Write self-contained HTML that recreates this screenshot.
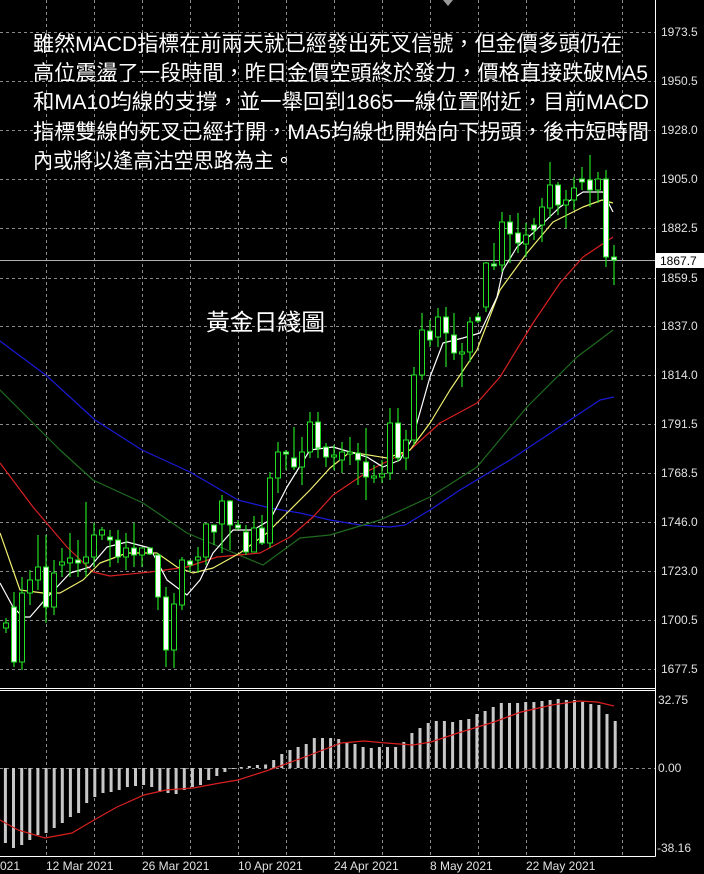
<!DOCTYPE html>
<html><head><meta charset="utf-8"><style>
html,body{margin:0;padding:0;background:#000;}
svg{display:block;}
</style></head><body>
<svg width="704" height="874" viewBox="0 0 704 874" xmlns="http://www.w3.org/2000/svg">
<rect width="704" height="874" fill="#000"/>
<!-- grid -->
<g stroke="#8a8a8a" stroke-width="1" stroke-dasharray="3,3">
<path d="M46.5 0V856M94.5 0V856M142.5 0V856M190.5 0V856M238.5 0V856M286.5 0V856M334.5 0V856M382.5 0V856M430.5 0V856M478.5 0V856M526.5 0V856M574.5 0V856M622.5 0V856"/>
<path d="M0 32.5H655M0 81.5H655M0 130.5H655M0 179.5H655M0 228.5H655M0 278.5H655M0 326.5H655M0 375.5H655M0 424.5H655M0 473.5H655M0 522.5H655M0 571.5H655M0 620.5H655M0 669.5H655M0 768.5H655"/>
</g>
<!-- last price line -->
<path d="M0 260.5H655" stroke="#b0b0b0" stroke-width="1"/>
<!-- MAs -->
<g fill="none" stroke-width="1.2" stroke-linejoin="round">
<polyline stroke="#1a1ad8" points="0,341 47,376 95,420 142,450 190,472 238,500 270,508 300,513 330,520 360,525 390,527 405,525 430,510 460,490 480,478 510,460 540,440 570,420 600,400 614,397"/>
<polyline stroke="#1f6b1f" points="0,390 30,420 60,450 93,480 143,503 187,533 227,550 263,565 300,538 330,535 380,520 430,497 477,467 527,407 577,357 613,330"/>
<polyline stroke="#d82020" points="0,463 33,507 67,547 93,572 110,576 150,572 187,567 217,557 260,553 290,537 313,517 333,495 370,470 410,450 440,423 477,403 500,377 533,323 560,283 583,257 613,237"/>
<polyline stroke="#f0f070" points="0,533 20,590 43,593 60,593 83,580 100,563 127,553 157,553 177,567 193,573 213,568 240,553 267,533 287,513 310,490 330,468 350,452 387,458 410,450 430,423 450,390 477,350 500,290 527,253 553,222 583,207 602,200 613,203"/>
<polyline stroke="#ffffff" points="0,583 13,607 23,617 30,617 43,602 70,573 90,567 107,547 127,542 150,548 167,580 187,595 200,580 213,553 233,530 253,530 270,520 287,487 310,450 333,447 367,457 383,467 400,460 413,437 430,377 443,343 463,338 480,333 497,297 503,270 517,247 533,233 560,207 583,192 603,192 613,212"/>
</g>
<!-- candle wicks -->
<path stroke="#22e022" stroke-width="1.2" fill="none" d="M6 618V633M14 592V667M22 577V670M30 570V605M38 535V590M46 535V623M54 560V615M62 548V577M70 533V577M78 540V577M86 502V577M94 523V567M102 527V540M110 530V567M118 530V563M126 533V570M134 523V567M142 548V567M150 548V555M158 553V610M166 587V667M174 593V668M182 557V610M190 560V572M198 547V573M206 523V565M214 525V545M222 495V553M230 500V550M238 520V530M246 525V555M254 516V552M262 515V545M270 472V548M278 442V493M286 450V470M294 427V470M302 437V485M310 412V458M318 412V458M326 443V467M334 445V470M342 442V473M350 437V465M358 443V485M366 428V500M374 465V483M382 460V483M390 408V480M398 408V462M406 430V470M414 367V445M422 313V380M430 320V347M438 308V347M446 307V367M454 313V360M462 343V387M470 317V362M478 313V323M486 262V312M494 243V270M502 212V272M510 215V263M518 213V253M526 223V257M534 218V240M542 198V242M550 162V218M558 182V215M566 190V228M574 177V210M582 167V190M590 155V207M598 172V203M606 170V267M614 245V285"/>
<!-- bodies: hollow -->
<g stroke="#22e022" stroke-width="1" fill="#000">
<rect x="3.5" y="623" width="5" height="5"/><rect x="19.5" y="593" width="5" height="69"/><rect x="27.5" y="580" width="5" height="13"/><rect x="35.5" y="567" width="5" height="13"/><rect x="51.5" y="573" width="5" height="34"/><rect x="59.5" y="562" width="5" height="3"/><rect x="67.5" y="558" width="5" height="5"/><rect x="83.5" y="557" width="5" height="6"/><rect x="91.5" y="535" width="5" height="22"/><rect x="99.5" y="530" width="5" height="5"/><rect x="123.5" y="548" width="5" height="9"/><rect x="139.5" y="548" width="5" height="7"/><rect x="171.5" y="604" width="5" height="46"/><rect x="179.5" y="560" width="5" height="45"/><rect x="195.5" y="557" width="5" height="3"/><rect x="203.5" y="524" width="5" height="33"/><rect x="219.5" y="501" width="5" height="23"/><rect x="251.5" y="528" width="5" height="24"/><rect x="267.5" y="478" width="5" height="65"/><rect x="275.5" y="452" width="5" height="26"/><rect x="299.5" y="452" width="5" height="15"/><rect x="307.5" y="422" width="5" height="30"/><rect x="331.5" y="455" width="5" height="2"/><rect x="339.5" y="452" width="5" height="8"/><rect x="347.5" y="452" width="5" height="2"/><rect x="371.5" y="476" width="5" height="2"/><rect x="379.5" y="474" width="5" height="3"/><rect x="387.5" y="423" width="5" height="50"/><rect x="403.5" y="440" width="5" height="18"/><rect x="411.5" y="375" width="5" height="65"/><rect x="419.5" y="330" width="5" height="45"/><rect x="435.5" y="317" width="5" height="20"/><rect x="459.5" y="352" width="5" height="2"/><rect x="467.5" y="322" width="5" height="30"/><rect x="483.5" y="263" width="5" height="44"/><rect x="499.5" y="222" width="5" height="43"/><rect x="523.5" y="235" width="5" height="9"/><rect x="539.5" y="207" width="5" height="18"/><rect x="547.5" y="185" width="5" height="23"/><rect x="563.5" y="200" width="5" height="5"/><rect x="571.5" y="188" width="5" height="12"/><rect x="595.5" y="179" width="5" height="11"/>
</g>
<!-- bodies: filled -->
<g stroke="#22e022" stroke-width="1" fill="#fff">
<rect x="11.5" y="607" width="5" height="55"/><rect x="43.5" y="567" width="5" height="40"/><rect x="75.5" y="560" width="5" height="3"/><rect x="107.5" y="537" width="5" height="3"/><rect x="115.5" y="540" width="5" height="17"/><rect x="131.5" y="548" width="5" height="7"/><rect x="147.5" y="548" width="5" height="6"/><rect x="155.5" y="555" width="5" height="42"/><rect x="163.5" y="597" width="5" height="53"/><rect x="187.5" y="561" width="5" height="4"/><rect x="211.5" y="525" width="5" height="7"/><rect x="227.5" y="501" width="5" height="24"/><rect x="235.5" y="525" width="5" height="3"/><rect x="243.5" y="532" width="5" height="20"/><rect x="259.5" y="528" width="5" height="15"/><rect x="283.5" y="452" width="5" height="2"/><rect x="291.5" y="458" width="5" height="9"/><rect x="315.5" y="422" width="5" height="26"/><rect x="323.5" y="447" width="5" height="10"/><rect x="355.5" y="453" width="5" height="7"/><rect x="363.5" y="462" width="5" height="15"/><rect x="395.5" y="423" width="5" height="35"/><rect x="427.5" y="331" width="5" height="9"/><rect x="443.5" y="317" width="5" height="16"/><rect x="451.5" y="335" width="5" height="18"/><rect x="475.5" y="317" width="5" height="4"/><rect x="491.5" y="264" width="5" height="2"/><rect x="507.5" y="222" width="5" height="12"/><rect x="515.5" y="233" width="5" height="10"/><rect x="531.5" y="225" width="5" height="5"/><rect x="555.5" y="185" width="5" height="20"/><rect x="579.5" y="179" width="5" height="3"/><rect x="587.5" y="180" width="5" height="10"/><rect x="603.5" y="179" width="5" height="78"/><rect x="611.5" y="257" width="5" height="3"/>
</g>
<!-- MACD histogram -->
<path stroke="#c8c8c8" stroke-width="3" fill="none" d="M5.4 768V843M13.5 768V848M21.7 768V845M29.8 768V840M37.9 768V835M46.1 768V833M54.2 768V828M62.3 768V823M70.4 768V817M78.6 768V813M86.7 768V803M94.8 768V797M103 768V793M111.1 768V792M119.2 768V790M127.4 768V787M135.5 768V786M143.6 768V785M151.7 768V787M159.9 768V792M168 768V793M176.1 768V794M184.3 768V790M192.4 768V787M200.5 768V785M208.7 768V780M216.8 768V776M224.9 768V772M233 768V769M241.2 768V767M249.3 768V766M257.4 768V765M265.6 768V764.5M273.7 768V760M281.8 768V754M290 768V750M298.1 768V747M306.2 768V744M314.3 768V738M322.5 768V738M330.6 768V738M338.7 768V739M346.9 768V742M355 768V744M363.1 768V747M371.3 768V748M379.4 768V747M387.5 768V747M395.6 768V747M403.8 768V742M411.9 768V733M420 768V728M428.2 768V723M436.3 768V721M444.4 768V721M452.6 768V722M460.7 768V720M468.8 768V719M476.9 768V714M485.1 768V711M493.2 768V707M501.3 768V703M509.5 768V703M517.6 768V703M525.7 768V702M533.9 768V702M542 768V701M550.1 768V700M558.2 768V699M566.4 768V700M574.5 768V700M582.6 768V702M590.8 768V704M598.9 768V705M607 768V714M615.2 768V721"/>
<polyline fill="none" stroke="#d82020" stroke-width="1.2" points="0,820 18,830 45,838 72,833 94,820 117,807 144,795 166,790 193,788 220,783 238,780 269,770 305,757 341,743 364,741 386,743 413,745 431,742 458,733 494,722 521,712 552,705 579,701 597,702 614,706"/>
<!-- frames -->
<g stroke="#fff" stroke-width="1" fill="none">
<path d="M655.5 0V856.5M0 688.5H655M0 690.5H655M0 856.5H655.5"/>
</g>
<path d="M443 0L453 0L448 6Z" fill="#999"/>
<!-- axis labels -->
<g font-family="Liberation Sans, sans-serif" font-size="12" fill="#e0e0e0">
<text x="661" y="36">1973.5</text><text x="661" y="85">1950.5</text><text x="661" y="134">1928.0</text><text x="661" y="183">1905.0</text><text x="661" y="232">1882.5</text><text x="661" y="282">1859.5</text><text x="661" y="330">1837.0</text><text x="661" y="379">1814.0</text><text x="661" y="428">1791.5</text><text x="661" y="477">1768.5</text><text x="661" y="526">1746.0</text><text x="661" y="575">1723.0</text><text x="661" y="624">1700.5</text><text x="661" y="673">1677.5</text>
<text x="658" y="704">32.75</text><text x="658" y="772">0.00</text><text x="657" y="852">-38.16</text>
<text x="0" y="870">021</text><text x="46" y="870">12 Mar 2021</text><text x="142" y="870">26 Mar 2021</text><text x="238" y="870">10 Apr 2021</text><text x="334" y="870">24 Apr 2021</text><text x="430" y="870">8 May 2021</text><text x="526" y="870">22 May 2021</text>
</g>
<rect x="656" y="253" width="48" height="15" fill="#fff"/>
<text x="660" y="265" font-family="Liberation Sans, sans-serif" font-size="12" fill="#000">1867.7</text>
<!-- overlay text -->
<g font-family="Liberation Sans, 'Noto Sans CJK TC', sans-serif" font-size="21" fill="#fff">
<text x="33" y="51" textLength="589" lengthAdjust="spacingAndGlyphs">雖然MACD指標在前兩天就已經發出死叉信號，但金價多頭仍在</text>
<text x="33" y="80" textLength="615" lengthAdjust="spacingAndGlyphs">高位震盪了一段時間，昨日金價空頭終於發力，價格直接跌破MA5</text>
<text x="33" y="109" textLength="616" lengthAdjust="spacingAndGlyphs">和MA10均線的支撐，並一舉回到1865一線位置附近，目前MACD</text>
<text x="33" y="139" textLength="616" lengthAdjust="spacingAndGlyphs">指標雙線的死叉已經打開，MA5均線也開始向下拐頭，後市短時間</text>
<text x="33" y="168" textLength="261" lengthAdjust="spacingAndGlyphs">內或將以逢高沽空思路為主。</text>
<text x="206" y="330" font-size="23" textLength="119" lengthAdjust="spacingAndGlyphs">黃金日綫圖</text>
</g>
</svg>
</body></html>
